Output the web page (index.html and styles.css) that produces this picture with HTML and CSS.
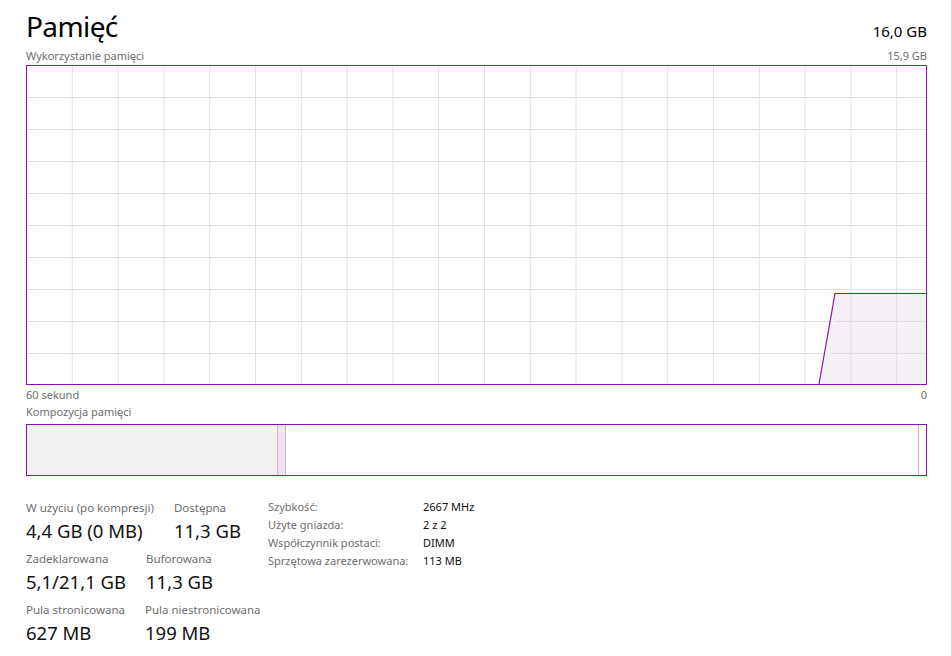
FILE: index.html
```html
<!DOCTYPE html>
<html lang="pl">
<head>
<meta charset="utf-8">
<title>Pamięć</title>
<link rel="stylesheet" href="styles.css">
</head>
<body>
<div class="page">
  <div class="head">
    <h1 class="title">Pamięć</h1>
    <div class="total">16,0 GB</div>
  </div>
  <div class="caption-row top-cap">
    <span>Wykorzystanie pamięci</span>
    <span>15,9 GB</span>
  </div>
  <svg class="graph" width="901" height="320" viewBox="0 0 901 320">
    <g class="grid" stroke="#e2dee3" stroke-width="1">
      <path d="M46.3 1V319M92.1 1V319M137.9 1V319M183.7 1V319M229.5 1V319M275.3 1V319M321.1 1V319M366.9 1V319M412.7 1V319M458.5 1V319M504.3 1V319M550.1 1V319M595.9 1V319M641.7 1V319M687.5 1V319M733.3 1V319M779.1 1V319M824.9 1V319M870.7 1V319"/>
      <path d="M1 32.5H900M1 64.5H900M1 96.5H900M1 128.5H900M1 160.5H900M1 192.5H900M1 224.5H900M1 256.5H900M1 288.5H900"/>
    </g>
    <polygon points="793,319 809,228 900,228 900,319" fill="#f3eff4" fill-opacity="0.9"/>
    <g class="grid-over" stroke="#e2dee3" stroke-width="1">
      <path d="M824.9 229V319M870.7 229V319M809 256.5H900M805 288.5H900"/>
    </g>
    <polyline points="793,319 809,228.5 900,228.5" fill="none" stroke="#8b12ae" stroke-width="1.2"/>
    <rect x="0.5" y="0.5" width="900" height="319" fill="none" stroke="#8b12ae" stroke-width="1"/>
  </svg>
  <div class="caption-row axis">
    <span>60 sekund</span>
    <span>0</span>
  </div>
  <div class="caption-row comp-label">
    <span>Kompozycja pamięci</span>
  </div>
  <div class="comp">
    <div class="seg inuse"></div>
    <div class="seg modified"></div>
    <div class="seg standby"></div>
    <div class="seg free"></div>
  </div>
  <div class="stats">
    <div class="left">
      <div class="row">
        <div class="stat"><div class="lbl">W użyciu (po kompresji)</div><div class="val">4,4 GB (0 MB)</div></div>
        <div class="stat"><div class="lbl">Dostępna</div><div class="val">11,3 GB</div></div>
      </div>
      <div class="row">
        <div class="stat"><div class="lbl">Zadeklarowana</div><div class="val">5,1/21,1 GB</div></div>
        <div class="stat"><div class="lbl">Buforowana</div><div class="val">11,3 GB</div></div>
      </div>
      <div class="row">
        <div class="stat"><div class="lbl">Pula stronicowana</div><div class="val">627 MB</div></div>
        <div class="stat"><div class="lbl">Pula niestronicowana</div><div class="val">199 MB</div></div>
      </div>
    </div>
    <div class="right">
      <span class="k">Szybkość:</span><span class="v">2667 MHz</span>
      <span class="k">Użyte gniazda:</span><span class="v">2 z 2</span>
      <span class="k">Współczynnik postaci:</span><span class="v">DIMM</span>
      <span class="k">Sprzętowa zarezerwowana:</span><span class="v">113 MB</span>
    </div>
  </div>
</div>
</body>
</html>
```

FILE: styles.css
```css
* { box-sizing: border-box; }
html, body { margin: 0; padding: 0; background: #ffffff; }
body {
  font-family: "Segoe UI", "Noto Sans", "Open Sans", sans-serif;
  color: #000;
}
.page {
  width: 952px;
  height: 656px;
  padding: 0 24px 0 26px;
  border-right: 1px solid #d9d9d9;
  display: flex;
  flex-direction: column;
  overflow: hidden;
}
.head {
  display: flex;
  justify-content: space-between;
  align-items: baseline;
  height: 44px;
  padding-top: 8px;
  flex: none;
}
.title {
  margin: 0;
  font-weight: 400;
  font-size: 28px;
  line-height: 36px;
  letter-spacing: -0.6px;
}
.total {
  font-size: 15px;
  line-height: 20px;
}
.caption-row {
  display: flex;
  justify-content: space-between;
  font-size: 11px;
  line-height: 15px;
  color: #6e6e6e;
  height: 19px;
  align-items: flex-start;
  flex: none;
}
.top-cap { height: 21px; padding-top: 4px; }
.graph { display: block; flex: none; }
.axis { height: 18px; padding-top: 2px; }
.comp-label { height: 21px; padding-top: 1px; }
.comp {
  display: flex;
  height: 52px;
  border: 1px solid #8b12ae;
  flex: none;
}
.seg { height: 100%; }
.inuse { width: 250px; background: #f2f2f2; }
.modified { width: 9px; background: #efe5f3; border-left: 1px solid #cdb3d8; border-right: 1px solid #cdb3d8; }
.standby { flex: 1; background: #fff; }
.free { width: 8px; background: #fff; border-left: 1px solid #cdb3d8; }
.stats {
  display: grid;
  grid-template-columns: 242px 1fr;
  margin-top: 24px;
}
.left { display: flex; flex-direction: column; }
.row { display: flex; gap: 20px; height: 51px; }
.stat { display: flex; flex-direction: column; }
.lbl { font-size: 11.5px; line-height: 16px; color: #6e6e6e; }
.val { font-size: 18.5px; line-height: 30px; color: #111; }
.right {
  display: grid;
  grid-template-columns: 155px auto;
  grid-auto-rows: 18px;
  align-content: start;
  font-size: 11px;
  line-height: 16px;
  margin-top: -1px;
}
.k { color: #6e6e6e; }
.v { color: #111; }
```
